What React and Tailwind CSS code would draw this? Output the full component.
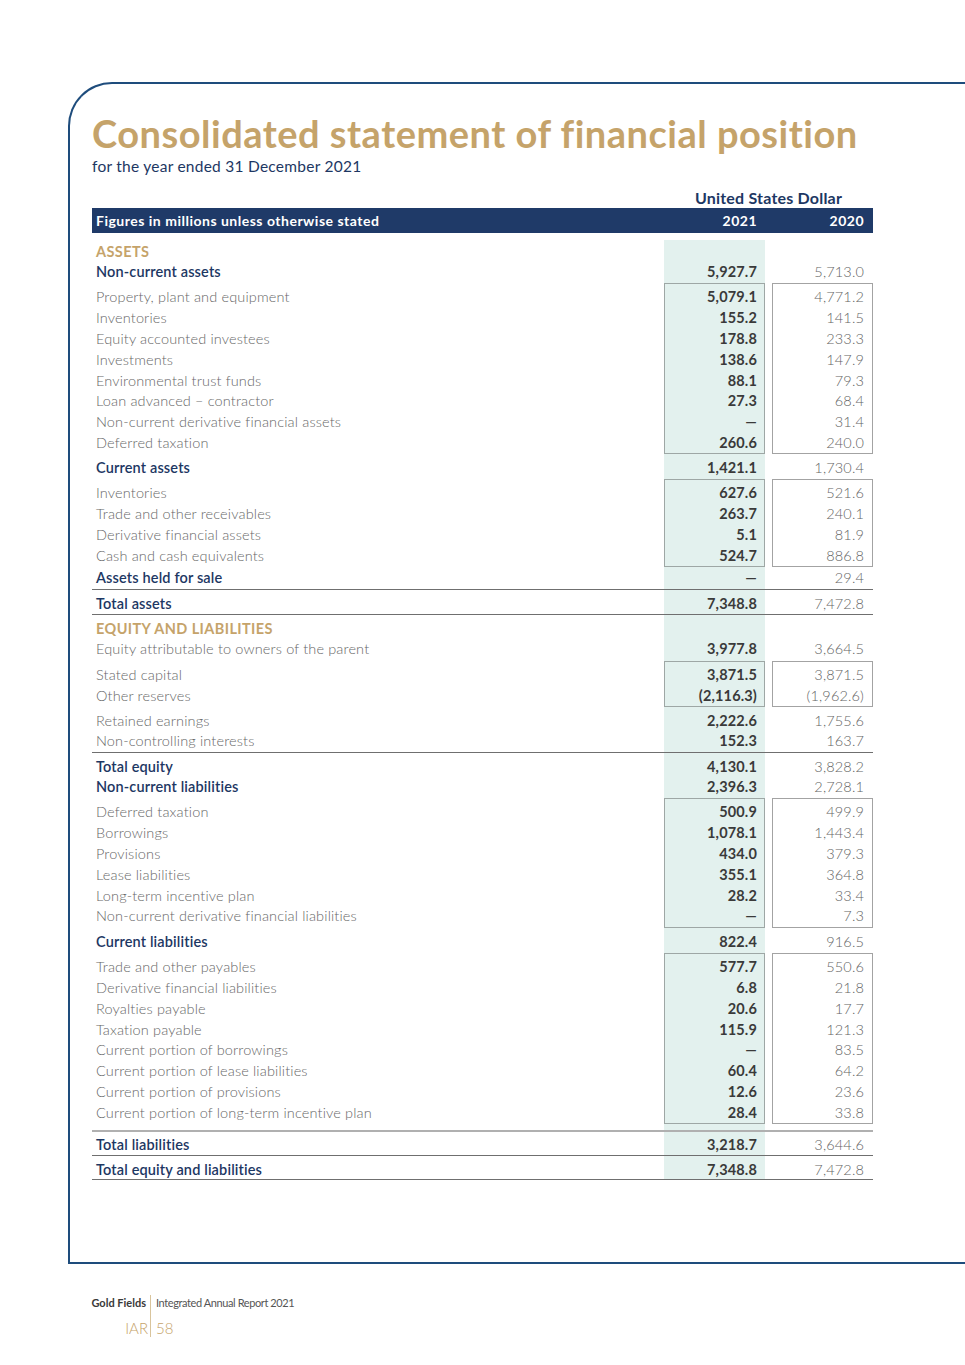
import React from "react";

const G = "grid grid-cols-[572px_101px_7px_101px]";
const FONT = { fontFamily: "Lato, 'Open Sans', sans-serif" };

function Row({ label, a, b, kind = "light", className = "" }) {
  let labelCls = "text-[#676767] font-light";
  if (kind === "gold") labelCls = "text-[#c5a36a] font-bold uppercase tracking-[0.4px]";
  if (kind === "blue") labelCls = "text-[#1d3763] font-semibold";
  return (
    <div className={`${G} h-[20.8px] text-[14.5px] tracking-[0.15px] ${className}`}>
      <div className={`flex items-center pl-1 whitespace-nowrap ${labelCls}`}>{label}</div>
      <div className="flex items-center justify-end pr-2 font-bold text-[#3a3a3a] text-[14.5px]">{a}</div>
      <div />
      <div className="flex items-center justify-end pr-[9px] font-light text-[#646464] text-[14.5px]">{b}</div>
    </div>
  );
}

function Group({ rows, className = "" }) {
  return (
    <div className={`${G} text-[14.5px] tracking-[0.15px] ${className}`}>
      <div className="pt-[3.6px]">
        {rows.map((r, i) => (
          <div key={i} className="h-[20.8px] flex items-center pl-1 whitespace-nowrap font-light text-[#676767]">
            {r[0]}
          </div>
        ))}
      </div>
      <div className="border border-[#9ea7a5] pt-[2.6px]">
        {rows.map((r, i) => (
          <div key={i} className="h-[20.8px] flex items-center justify-end pr-[7px] font-bold text-[#3a3a3a]">
            {r[1]}
          </div>
        ))}
      </div>
      <div />
      <div className="border border-[#a3a3a3] pt-[2.6px]">
        {rows.map((r, i) => (
          <div key={i} className="h-[20.8px] flex items-center justify-end pr-[8px] font-light text-[#646464]">
            {r[2]}
          </div>
        ))}
      </div>
    </div>
  );
}

function Line({ className = "" }) {
  return <div className={`h-px bg-[#6f6f6f] ${className}`} />;
}

export default function App() {
  return (
    <div className="w-[965px] h-[1365px] bg-white overflow-hidden" style={FONT}>
      <div className="ml-[68px] mt-[82px] w-[897px] h-[1182px] border-t-2 border-l-2 border-b-2 border-[#1e4c7c] rounded-tl-[44px] pl-[22px] pt-[30px]">
        <div className="w-[781px]">
          <h1 className="h-[38px] leading-[38px] text-[38px] tracking-[0.5px] font-bold text-[#c5a36a] whitespace-nowrap">
            Consolidated statement of financial position
          </h1>
          <div className="mt-[4px] h-[20px] leading-[20px] text-[15.5px] tracking-[0.25px] text-[#1d3763] whitespace-nowrap">
            for the year ended 31 December 2021
          </div>
          <div className={`${G} mt-[10px] h-[20px]`}>
            <div />
            <div className="col-span-3 flex items-center justify-center text-[16px] tracking-[0.2px] font-bold text-[#1d3763] whitespace-nowrap">
              United States Dollar
            </div>
          </div>
          <div className={`${G} mt-[2px] h-[25px] bg-[#1f3a68] text-white text-[14px] tracking-[0.5px] font-bold`}>
            <div className="flex items-center pl-1 whitespace-nowrap">Figures in millions unless otherwise stated</div>
            <div className="flex items-center justify-end pr-2">2021</div>
            <div />
            <div className="flex items-center justify-end pr-[9px]">2020</div>
          </div>

          <div className="mt-[7px] pt-[0.6px] bg-[linear-gradient(to_right,transparent_572px,#e3f1ee_572px,#e3f1ee_673px,transparent_673px)]">
            <Row label="Assets" kind="gold" />
            <Row label="Non-current assets" kind="blue" a="5,927.7" b="5,713.0" />
            <Group
              className="mt-[1px]"
              rows={[
                ["Property, plant and equipment", "5,079.1", "4,771.2"],
                ["Inventories", "155.2", "141.5"],
                ["Equity accounted investees", "178.8", "233.3"],
                ["Investments", "138.6", "147.9"],
                ["Environmental trust funds", "88.1", "79.3"],
                ["Loan advanced – contractor", "27.3", "68.4"],
                ["Non-current derivative financial assets", "—", "31.4"],
                ["Deferred taxation", "260.6", "240.0"],
              ]}
            />
            <Row className="mt-[2.6px]" label="Current assets" kind="blue" a="1,421.1" b="1,730.4" />
            <Group
              className="mt-[1.6px]"
              rows={[
                ["Inventories", "627.6", "521.6"],
                ["Trade and other receivables", "263.7", "240.1"],
                ["Derivative financial assets", "5.1", "81.9"],
                ["Cash and cash equivalents", "524.7", "886.8"],
              ]}
            />
            <Row label="Assets held for sale" kind="blue" a="—" b="29.4" />
            <Line className="mt-[1.6px]" />
            <Row className="mt-[2.4px]" label="Total assets" kind="blue" a="7,348.8" b="7,472.8" />
            <Line className="mt-[0.8px]" />
            <Row className="mt-[2.4px]" label="Equity and liabilities" kind="gold" />
            <Row label="Equity attributable to owners of the parent" a="3,977.8" b="3,664.5" />
            <Group
              className="mt-[1.4px]"
              rows={[
                ["Stated capital", "3,871.5", "3,871.5"],
                ["Other reserves", "(2,116.3)", "(1,962.6)"],
              ]}
            />
            <Row className="mt-[2.8px]" label="Retained earnings" a="2,222.6" b="1,755.6" />
            <Row label="Non-controlling interests" a="152.3" b="163.7" />
            <Line className="mt-[1px]" />
            <Row className="mt-[2.4px]" label="Total equity" kind="blue" a="4,130.1" b="3,828.2" />
            <Row label="Non-current liabilities" kind="blue" a="2,396.3" b="2,728.1" />
            <Group
              className="mt-[1px]"
              rows={[
                ["Deferred taxation", "500.9", "499.9"],
                ["Borrowings", "1,078.1", "1,443.4"],
                ["Provisions", "434.0", "379.3"],
                ["Lease liabilities", "355.1", "364.8"],
                ["Long-term incentive plan", "28.2", "33.4"],
                ["Non-current derivative financial liabilities", "—", "7.3"],
              ]}
            />
            <Row className="mt-[3px]" label="Current liabilities" kind="blue" a="822.4" b="916.5" />
            <Group
              className="mt-[1.6px]"
              rows={[
                ["Trade and other payables", "577.7", "550.6"],
                ["Derivative financial liabilities", "6.8", "21.8"],
                ["Royalties payable", "20.6", "17.7"],
                ["Taxation payable", "115.9", "121.3"],
                ["Current portion of borrowings", "—", "83.5"],
                ["Current portion of lease liabilities", "60.4", "64.2"],
                ["Current portion of provisions", "12.6", "23.6"],
                ["Current portion of long-term incentive plan", "28.4", "33.8"],
              ]}
            />
            <div className="mt-[6px] h-[2px] bg-[#b0b0b0]" />
            <Row className="mt-[1.6px]" label="Total liabilities" kind="blue" a="3,218.7" b="3,644.6" />
            <Line className="mt-[0.6px]" />
            <Row className="mt-[2.6px]" label="Total equity and liabilities" kind="blue" a="7,348.8" b="7,472.8" />
          </div>
          <Line />
        </div>
      </div>

      <div className="ml-[92px] mt-[31px] flex">
        <div className="w-[56px] flex flex-col items-end">
          <div className="pr-[2px] h-[16px] leading-[16px] text-[11px] font-bold text-[#3a3a3a] whitespace-nowrap tracking-[0px]">
            Gold Fields
          </div>
          <div className="mt-[7px] h-[20px] leading-[20px] text-[15px] font-light text-[#c5a36a]">IAR</div>
        </div>
        <div className="ml-[2px] w-px h-[42px] bg-[#d9c49c]" />
        <div className="ml-[5px] flex flex-col">
          <div className="h-[16px] leading-[16px] text-[11px] text-[#555555] whitespace-nowrap tracking-[-0.4px]">
            Integrated Annual Report 2021
          </div>
          <div className="mt-[7px] h-[20px] leading-[20px] text-[15px] font-light text-[#c5a36a]">58</div>
        </div>
      </div>
    </div>
  );
}
